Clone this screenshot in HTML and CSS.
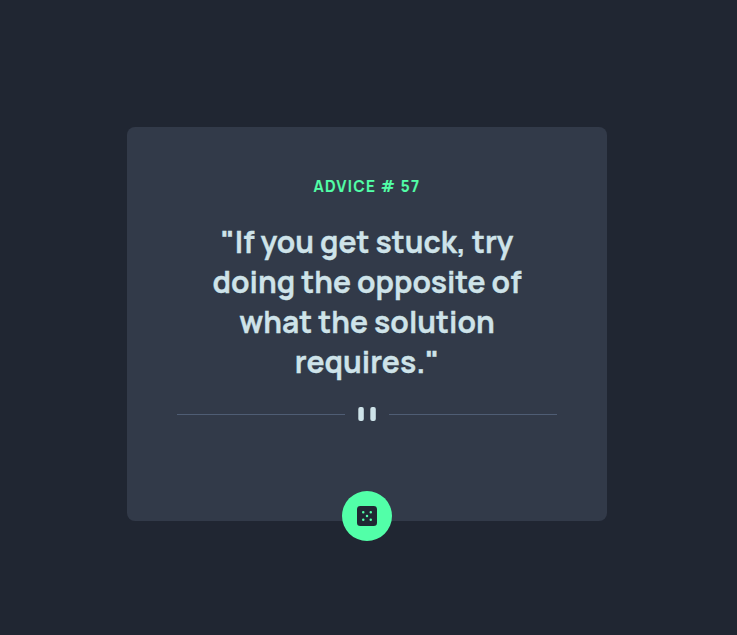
FILE: index.html
```html
<!DOCTYPE html>
<html lang="en">
<head>
<meta charset="utf-8">
<title>Advice Generator</title>
<link rel="stylesheet" href="styles.css">
</head>
<body>
<main class="card">
<h1 class="label">ADVICE # 57</h1>
<p class="quote"><span>"If you get stuck, try</span><span>doing the opposite of</span><span>what the solution</span><span>requires."</span></p>
<svg class="divider" width="380" height="16" viewBox="0 0 380 16"><path fill="#4F5D74" d="M0 8h168v1H0zM212 8h168v1H212z"/><g fill="#CEE3E9" transform="translate(181)"><rect x=".3" y="1" width="5.500" height="14" rx="2"/><rect x="12.300" y="1" width="5.500" height="14" rx="2"/></g></svg>
<button class="dice" aria-label="New advice"><svg width="20" height="20" viewBox="0 0 24 24"><path d="M20 0H4a4.005 4.005 0 0 0-4 4v16a4.005 4.005 0 0 0 4 4h16a4.005 4.005 0 0 0 4-4V4a4.005 4.005 0 0 0-4-4ZM7.500 18a1.500 1.500 0 1 1 0-3 1.500 1.500 0 0 1 0 3Zm0-9a1.500 1.500 0 1 1 0-3 1.500 1.500 0 0 1 0 3Zm4.500 4.500a1.500 1.500 0 1 1 0-3 1.500 1.500 0 0 1 0 3Zm4.500 4.500a1.500 1.500 0 1 1 0-3 1.500 1.500 0 0 1 0 3Zm0-9a1.500 1.500 0 1 1 0-3 1.500 1.500 0 0 1 0 3Z" fill="#202733"/></svg></button>
</main>
</body>
</html>
```
FILE: styles.css
```css
* { box-sizing: border-box; }
body { margin: 0; height: 635px; background: #202632; padding: 127px 0 0 127px; font-family: Manrope, Inter, "Open Sans", sans-serif; overflow: hidden; }
.card { position: relative; width: 480px; height: 394px; padding: 50px 50px 0; border-radius: 8px; background: #323a49; display: flex; flex-direction: column; align-items: center; }
.label { margin: 0; height: 20px; line-height: 20px; font-size: 15.2px; font-weight: 700; letter-spacing: 1.4px; color: #52ffa8; -webkit-text-stroke: .2px #52ffa8; }
.quote { margin: 25px 0 0; font-size: 30px; line-height: 40px; font-weight: 700; color: #cee3e9; text-align: center; -webkit-text-stroke: .3px #cee3e9; }
.quote span { display: block; white-space: nowrap; }
.divider { margin-top: 24px; display: block; }
.dice { position: absolute; left: 215px; bottom: -20px; width: 50px; height: 50px; border: 0; padding: 0; border-radius: 50%; background: #52ffa8; display: grid; place-items: center; }
```
